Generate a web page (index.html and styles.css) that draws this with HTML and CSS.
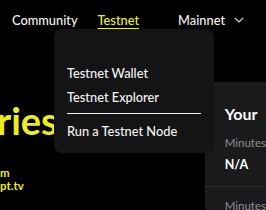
FILE: index.html
```html
<!DOCTYPE html>
<html lang="en">
<head>
<meta charset="utf-8">
<title>Testnet menu</title>
<link rel="stylesheet" href="styles.css">
</head>
<body>
<header class="nav">
  <a class="nav-link" href="#">Community</a>
  <a class="nav-link nav-active" href="#">Testnet</a>
  <a class="nav-link nav-main" href="#">Mainnet
    <svg class="chev" width="10" height="6" viewBox="0 0 10 6"><path d="M1 1 L5 5 L9 1" fill="none" stroke="#d8d8d8" stroke-width="1.2"/></svg>
  </a>
</header>
<div class="dropdown">
  <a class="dd-item" href="#">Testnet Wallet</a>
  <a class="dd-item" href="#">Testnet Explorer</a>
  <div class="dd-sep"></div>
  <a class="dd-item" href="#">Run a Testnet Node</a>
</div>
<main class="main">
  <section class="hero">
    <h1 class="hero-title">ries</h1>
    <p class="hero-links">m<br>pt.tv</p>
  </section>
  <section class="card">
    <h2 class="card-title">Your</h2>
    <div class="stat">
      <div class="stat-label">Minutes</div>
      <div class="stat-value">N/A</div>
    </div>
    <div class="stat stat-next">
      <div class="stat-label">Minutes</div>
    </div>
  </section>
</main>
</body>
</html>
```
FILE: styles.css
```css
* { box-sizing: border-box; }
html, body { margin: 0; padding: 0; }
body {
  width: 266px;
  height: 210px;
  overflow: hidden;
  background: #000;
  position: relative;
  font-family: Lato, "Noto Sans", sans-serif;
  color: #f2f2f2;
}
a { color: inherit; text-decoration: none; }
.nav {
  display: flex;
  align-items: center;
  height: 40px;
  padding-left: 12px;
  font-size: 12.8px;
  font-weight: 500;
}
.nav-link { white-space: nowrap; }
.nav-active {
  margin-left: 20px;
  color: #f0f01c;
  text-decoration: underline;
  text-underline-offset: 3px;
}
.nav-main { margin-left: 39px; display: flex; align-items: center; }
.chev { margin-left: 9px; }
.dropdown {
  position: absolute;
  left: 54px;
  top: 29px;
  width: 160px;
  height: 124px;
  background: #141416;
  border-radius: 8px;
  padding: 32px 13px 0 13px;
  display: flex;
  flex-direction: column;
  font-size: 12.8px;
  font-weight: 500;
  z-index: 2;
}
.dd-item { line-height: 24px; white-space: nowrap; }
.dd-sep { height: 1px; background: #f2f2f2; margin: 4px 0 5px; }
.main { display: flex; }
.hero { width: 210px; color: #ecec1e; }
.hero-title {
  margin: 57px 0 0 -3px;
  font-size: 38px;
  font-weight: 700;
  line-height: 46px;
}
.hero-links {
  margin: 23px 0 0;
  font-size: 11.5px;
  font-weight: 700;
  line-height: 13px;
}
.card {
  flex: 1;
  margin-top: 42px;
  height: 200px;
  background: #1a1a1d;
  border-radius: 8px 0 0 0;
  padding: 22px 0 0 20px;
}
.card-title {
  margin: 0;
  font-size: 16px;
  font-weight: 700;
  line-height: 20px;
  color: #fff;
}
.stat { margin-top: 12px; }
.stat-label { font-size: 11.5px; color: #8f8f94; line-height: 14px; }
.stat-value { margin-top: 7px; font-size: 12.5px; font-weight: 700; color: #fff; line-height: 16px; }
.stat-next {
  margin-left: -20px;
  padding-left: 20px;
  border-top: 1px solid #2c2c30;
  margin-top: 13px;
  padding-top: 12px;
}
```
